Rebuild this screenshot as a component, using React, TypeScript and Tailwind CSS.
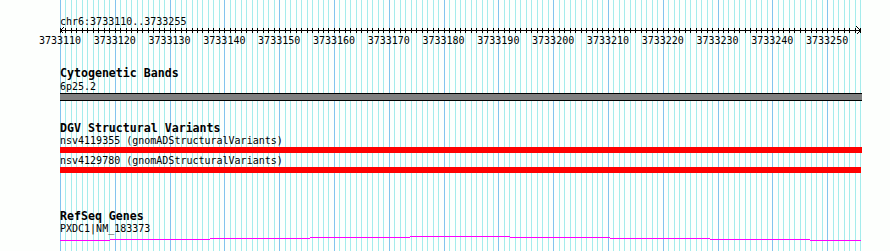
const mono = "font-['DejaVu_Sans_Mono','Liberation_Mono',monospace]";

const START = 3733110;
const SPAN = 146;
const LEFT = 60;
const WIDTH = 800;
const bpX = (i: number) => Math.round((i * WIDTH) / SPAN);

const gene: Array<[number, number, number]> = [
  [60, 110, 240],
  [110, 210, 239],
  [210, 310, 238],
  [310, 410, 237],
  [410, 510, 236],
  [510, 610, 237],
  [610, 710, 238],
  [710, 810, 239],
  [810, 861, 240],
];

function Grid() {
  return (
    <svg className="absolute inset-0" width={890} height={251} shapeRendering="crispEdges">
      {Array.from({ length: SPAN + 1 }, (_, i) => (
        <line
          key={i}
          x1={LEFT + bpX(i) + 0.5}
          x2={LEFT + bpX(i) + 0.5}
          y1={0}
          y2={251}
          stroke={i % 10 === 0 ? '#82c4ee' : '#a4ecec'}
          strokeWidth={1}
        />
      ))}
    </svg>
  );
}

function Ruler() {
  return (
    <div>
      <p className="h-[13px] text-[10px] leading-[13px]">chr6:3733110..3733255</p>
      <svg width={802} height={6} overflow="visible" shapeRendering="crispEdges" className="block">
        <line x1={0} x2={800} y1={2.5} y2={2.5} stroke="#000" />
        {Array.from({ length: SPAN + 1 }, (_, i) => (
          <line key={i} x1={bpX(i) + 0.5} x2={bpX(i) + 0.5} y1={0} y2={5} stroke="#000" />
        ))}
        <polyline points="3.5,-0.5 0.5,2.5 3.5,5.5" fill="none" stroke="#000" />
        <polyline points="796.5,-1.5 800.5,2.5 796.5,6.5" fill="none" stroke="#000" />
      </svg>
      <div className="relative h-[13px] text-[10px] leading-[13px]">
        {Array.from({ length: 15 }, (_, k) => (
          <span
            key={k}
            className="absolute top-0 w-[60px] -translate-x-1/2 text-center"
            style={{ left: (k * 10 * WIDTH) / SPAN }}
          >
            {START + k * 10}
          </span>
        ))}
      </div>
    </div>
  );
}

function Title({ children }: { children: string }) {
  return <p className="h-[13px] text-[11.6px] font-bold leading-[13px]">{children}</p>;
}

function Label({ children }: { children: string }) {
  return <p className="h-[12px] text-[10px] leading-[12px]">{children}</p>;
}

export default function App() {
  return (
    <div className={`relative h-[251px] w-[890px] overflow-hidden bg-[#fdfffd] text-black ${mono}`}>
      <Grid />
      <div className="relative flex flex-col pl-[60px] pt-[15px]">
        <Ruler />

        <div className="mt-[20px]">
          <Title>Cytogenetic Bands</Title>
          <p className="h-[13px] text-[10px] leading-[13px]">6p25.2</p>
          <div className="h-[8px] w-[802px] border-y border-black bg-[#808080]" />
        </div>

        <div className="mt-[21px]">
          <Title>DGV Structural Variants</Title>
          <Label>nsv4119355 (gnomADStructuralVariants)</Label>
          <div className="h-[6px] w-[802px] bg-[#ff0000]" />
          <div className="mt-[2px]">
            <Label>nsv4129780 (gnomADStructuralVariants)</Label>
          </div>
          <div className="h-[6px] w-[801px] bg-[#ff0000]" />
        </div>

        <div className="mt-[37px]">
          <Title>RefSeq Genes</Title>
          <Label>PXDC1|NM_183373</Label>
        </div>
      </div>
      <svg className="absolute inset-0" width={890} height={251} shapeRendering="crispEdges">
        {gene.map(([x1, x2, y], i) => (
          <line key={i} x1={x1} x2={x2} y1={y + 0.5} y2={y + 0.5} stroke="#ff00ff" strokeWidth={1} />
        ))}
      </svg>
    </div>
  );
}
